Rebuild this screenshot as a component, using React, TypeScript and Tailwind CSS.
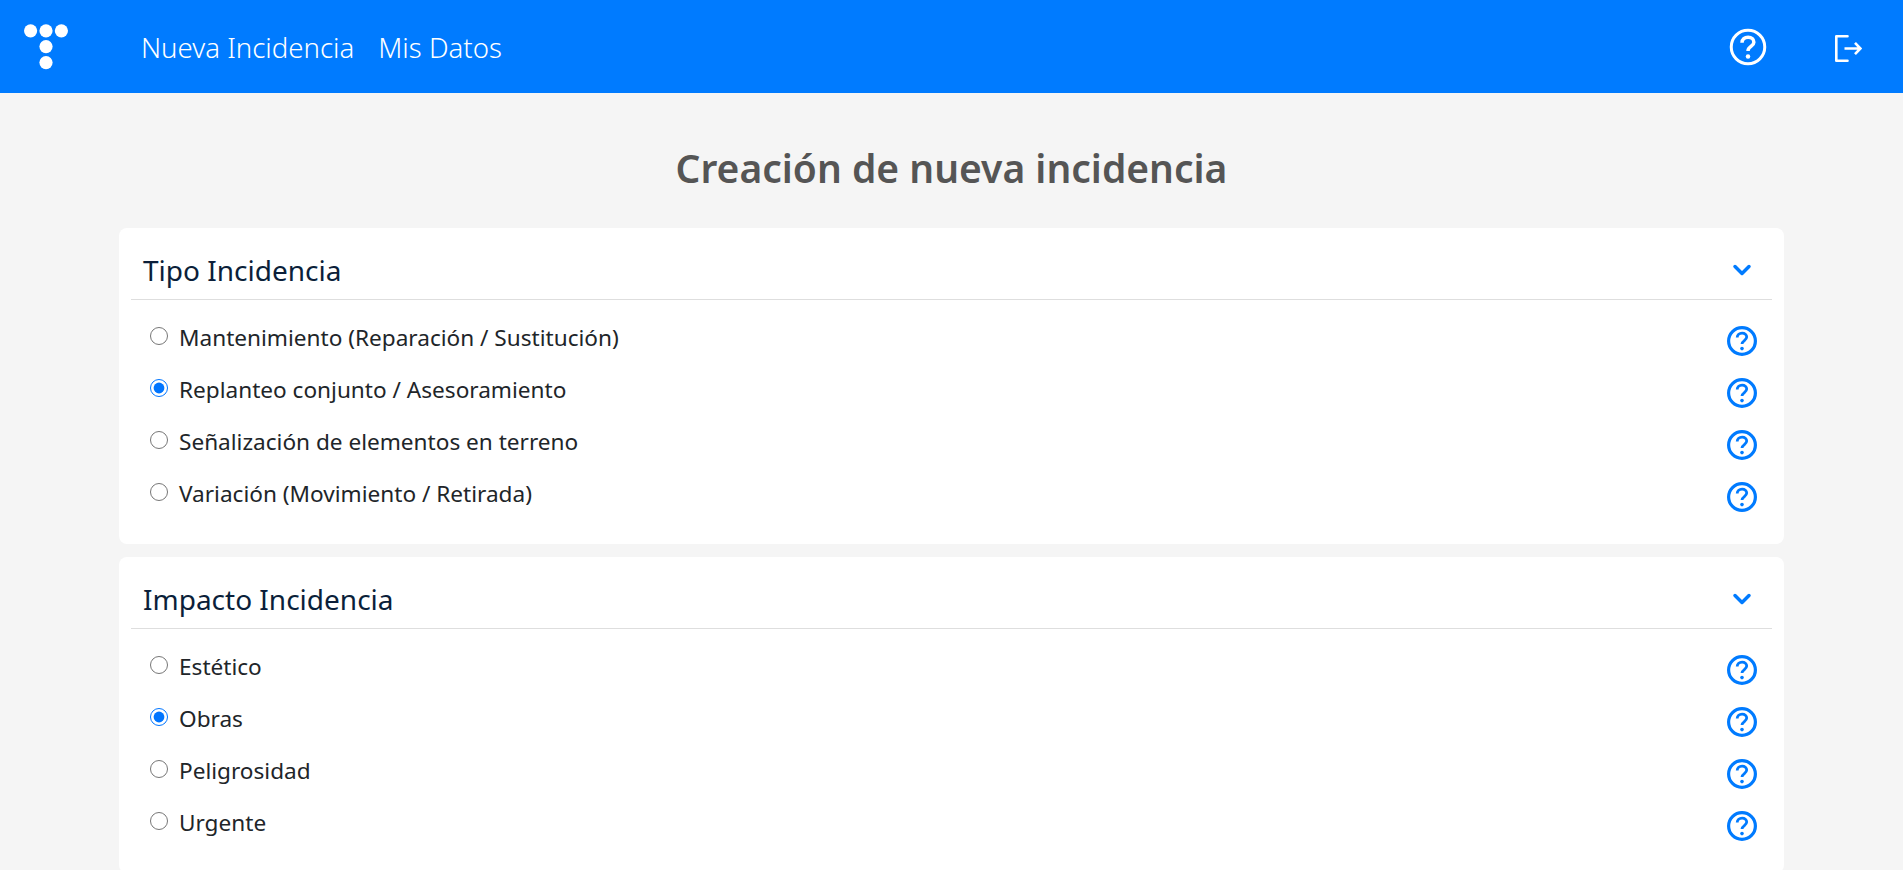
import { ChevronDown } from "lucide-react";

const sections = [
  {
    title: "Tipo Incidencia",
    name: "tipo",
    options: [
      { label: "Mantenimiento (Reparación / Sustitución)" },
      { label: "Replanteo conjunto / Asesoramiento", checked: true },
      { label: "Señalización de elementos en terreno" },
      { label: "Variación (Movimiento / Retirada)" },
    ],
  },
  {
    title: "Impacto Incidencia",
    name: "impacto",
    options: [
      { label: "Estético" },
      { label: "Obras", checked: true },
      { label: "Peligrosidad" },
      { label: "Urgente" },
    ],
  },
];

function HelpIcon({ className, stroke = 3.2 }: { className: string; stroke?: number }) {
  return (
    <svg viewBox="0 0 32 32" fill="none" stroke="currentColor" strokeWidth={stroke} className={className}>
      <circle cx="16" cy="16" r="13.4" />
      <path d="M11.2 12.6c0-2.8 2.2-4.5 4.9-4.5s4.6 1.7 4.6 4c0 3.4-4.7 3.5-4.7 7" strokeWidth="2.8" />
      <circle cx="16" cy="23.6" r="1.8" fill="currentColor" stroke="none" />
    </svg>
  );
}

function Logo() {
  return (
    <svg viewBox="0 0 44 46" className="h-[46px] w-[44px] fill-white">
      <circle cx="6.6" cy="6.8" r="6.6" />
      <circle cx="22" cy="6.8" r="6.6" />
      <circle cx="37.4" cy="6.8" r="6.6" />
      <circle cx="22" cy="22.6" r="6.6" />
      <circle cx="22" cy="38.6" r="6.6" />
    </svg>
  );
}

function LogoutIcon() {
  return (
    <svg viewBox="0 0 27 27" fill="none" stroke="white" strokeWidth="2.6" className="h-[27px] w-[27px]">
      <path d="M12.5 1.3H1.3v24.4h11.2" strokeLinecap="round" strokeLinejoin="round" />
      <path d="M9.5 13.5H25M20 7.8l5.4 5.7-5.4 5.7" />
    </svg>
  );
}

export default function App() {
  return (
    <div className="h-screen overflow-hidden bg-[#f5f5f5] font-['Noto_Sans',sans-serif]">
      <header className="flex h-[93px] items-center bg-[#007bff] text-white">
        <div className="mb-[-1px] ml-[24px]">
          <Logo />
        </div>
        <nav className="mt-[3px] ml-[73px] flex gap-[24px] text-[27.6px] font-light">
          <a>Nueva Incidencia</a>
          <a>Mis Datos</a>
        </nav>
        <div className="mr-[41px] ml-auto flex items-center gap-[67px]">
          <HelpIcon className="h-[40px] w-[40px]" stroke={2.4} />
          <div className="mt-[4px]">
            <LogoutIcon />
          </div>
        </div>
      </header>

      <h1 className="mt-[48px] mb-[33px] text-center text-[39px] leading-[54px] font-semibold text-[#555]">
        Creación de nueva incidencia
      </h1>

      <main className="mx-[119px] flex flex-col gap-[13px]">
        {sections.map((s) => (
          <section key={s.name} className="rounded-[8px] bg-white px-[12px] pt-[12px] pb-[23px]">
            <div className="flex h-[60px] items-center justify-between border-b border-[#dedede] pr-[16px] pl-[12px]">
              <h2 className="text-[28px] text-[#0b1f3a]">{s.title}</h2>
              <ChevronDown className="h-[28px] w-[28px] text-[#007bff]" strokeWidth={3} />
            </div>
            <div className="pt-[13px]">
              {s.options.map((o) => (
                <label key={o.label} className="flex h-[52px] items-center pr-[14px] pl-[19px] text-[22.6px] text-[#212529]">
                  <input
                    type="radio"
                    name={s.name}
                    defaultChecked={o.checked}
                    className="mb-[6px] h-[18px] w-[18px]"
                  />
                  <span className="mb-[2px] ml-[11px]">{o.label}</span>
                  <HelpIcon className="mt-[3px] ml-auto h-[32px] w-[32px] text-[#007bff]" />
                </label>
              ))}
            </div>
          </section>
        ))}
      </main>
    </div>
  );
}
